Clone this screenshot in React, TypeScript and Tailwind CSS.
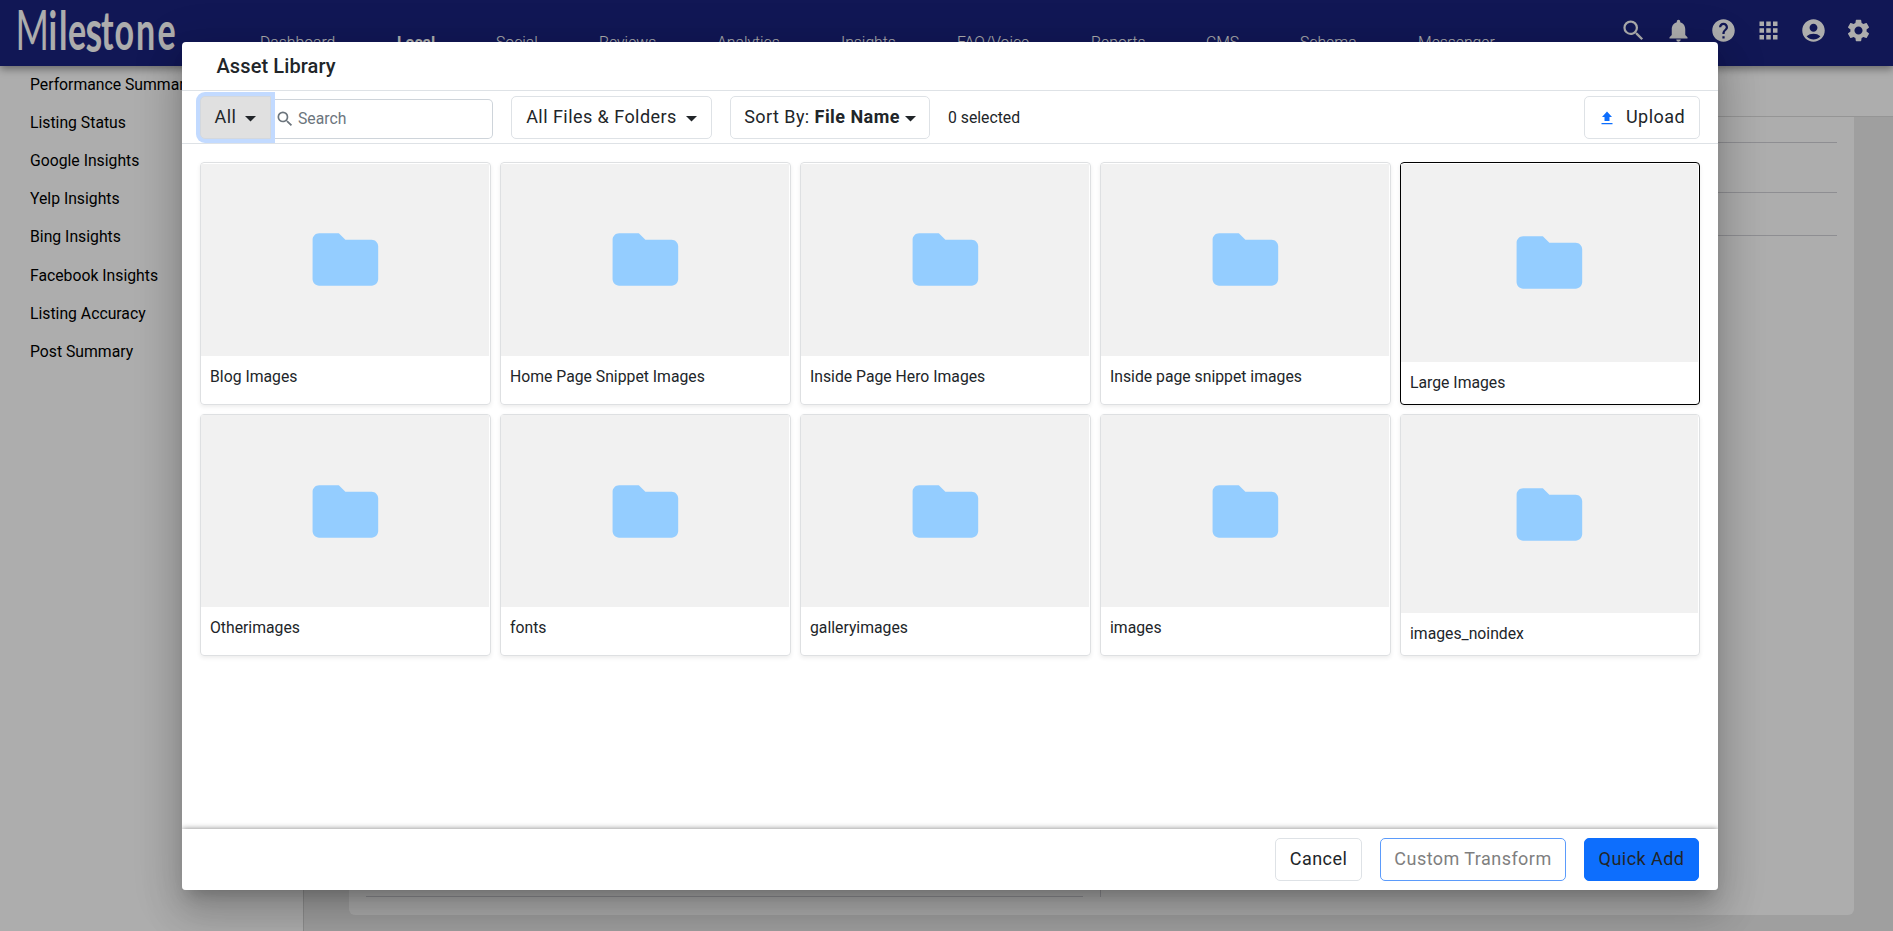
import type { ReactNode } from 'react'
import {
  MdAccountCircle,
  MdApps,
  MdFolder,
  MdHelp,
  MdNotifications,
  MdSearch,
  MdSettings,
} from 'react-icons/md'
import { clsx } from 'clsx'

const navItems = [
  { label: 'Dashboard', offset: 'w-[137px]' },
  { label: 'Local', offset: 'w-[99px]', active: true },
  { label: 'Social', offset: 'w-[103px]' },
  { label: 'Reviews', offset: 'w-[118px]' },
  { label: 'Analytics', offset: 'w-[124px]' },
  { label: 'Insights', offset: 'w-[116px]' },
  { label: 'FAQ/Voice', offset: 'w-[134px]' },
  { label: 'Reports', offset: 'w-[115px]' },
  { label: 'CMS', offset: 'w-[94px]' },
  { label: 'Schema', offset: 'w-[118px]' },
  { label: 'Messenger', offset: 'w-[100px]' },
]

const sideItems = [
  'Performance Summary',
  'Listing Status',
  'Google Insights',
  'Yelp Insights',
  'Bing Insights',
  'Facebook Insights',
  'Listing Accuracy',
  'Post Summary',
]

const folders = [
  'Blog Images',
  'Home Page Snippet Images',
  'Inside Page Hero Images',
  'Inside page snippet images',
  'Large Images',
  'Otherimages',
  'fonts',
  'galleryimages',
  'images',
  'images_noindex',
]

function Logo() {
  return (
    <svg width="190" height="66" viewBox="0 0 190 66" fill="#fff" className="overflow-visible">
      <text
        transform="translate(0 50) scale(1 1.56)"
        x="15.5 48.5 59 68 85.5 101 114.5 136 157.5"
        y="0"
        fontFamily="Lato, sans-serif"
        fontSize="34"
        fontWeight="700"
      >
        <tspan fontSize="36" fontWeight="400">M</tspan>ile<tspan dy="1.5" fontSize="38">s</tspan>
        <tspan dy="-1.5">tone</tspan>
      </text>
    </svg>
  )
}

function TopBar() {
  return (
    <header className="relative z-10 flex h-[66px] shrink-0 bg-[#1a237e] text-white shadow-[0_3px_8px_rgba(0,0,0,0.4)]">
      <div className="w-[260px] shrink-0">
        <Logo />
      </div>
      <nav className="flex pt-[33px] text-[15.75px] leading-5">
        {navItems.map(item => (
          <span key={item.label} className={clsx('shrink-0', item.offset, item.active ? 'font-bold' : 'font-light')}>
            {item.label}
          </span>
        ))}
      </nav>
      <div className="ml-auto flex gap-[18px] pt-[17px] pr-[21px] text-[27px]">
        <MdSearch />
        <MdNotifications />
        <MdHelp />
        <MdApps />
        <MdAccountCircle />
        <MdSettings />
      </div>
    </header>
  )
}

function PageBehind() {
  return (
    <div className="flex h-[931px] flex-col">
      <TopBar />
      <div className="flex min-h-0 flex-1">
        <aside className="w-[304px] shrink-0 border-r border-[#d0d0d0] bg-white pl-[30px] text-[15.75px] leading-6 text-black">
          {sideItems.map(item => (
            <div key={item} className="flex h-[38.1px] items-center whitespace-nowrap">
              {item}
            </div>
          ))}
        </aside>
        <main className="flex flex-1 flex-col bg-[#ebebeb]">
          <div className="h-[51px] shrink-0 border-b border-[#dcdcdc] bg-white" />
          <section className="mr-[39px] ml-[45px] h-[798px] rounded-b-md bg-white px-[17px]">
            <div className="h-[26px] border-b border-[#d2d2d8]" />
            <div className="h-[50px] border-b border-[#d2d2d8]" />
            <div className="h-[43px] border-b border-[#d2d2d8]" />
            <div className="flex h-[661px]">
              <div className="w-[717px] border-b border-[#d2d2d8]" />
              <div className="w-[18px] border-r border-[#d2d2d8]" />
            </div>
          </section>
        </main>
      </div>
    </div>
  )
}

function Button({ className, children }: { className: string; children: ReactNode }) {
  return (
    <button
      className={clsx(
        'flex h-[43px] shrink-0 items-center justify-center rounded-[5px] border pb-0.5 text-lg tracking-[0.45px] whitespace-nowrap',
        className
      )}
    >
      {children}
    </button>
  )
}

function Caret({ className }: { className?: string }) {
  return (
    <svg className={clsx('mt-1 shrink-0', className)} width="11" height="6" viewBox="0 0 11 6" fill="#212529">
      <path d="M0 0h11L5.5 5.5z" />
    </svg>
  )
}

function Toolbar() {
  return (
    <div className="flex h-[53px] shrink-0 items-start border-b border-[#dee2e6] px-[18px] pt-[5px]">
      <button className="relative flex h-[43px] w-[71px] shrink-0 items-center rounded-l-[5px] border border-[#d3d8de] bg-[#e0e0e0] pb-0.5 pl-[13.5px] text-lg tracking-[0.45px] shadow-[0_0_0_4px_#c2daff]">
        All
        <Caret className="ml-[9px]" />
      </button>
      <div className="mt-[3px] flex h-10 w-[222px] items-center rounded-r-[5px] border border-l-0 border-[#ced4da] pl-1 text-[15.75px] text-[#6c757d]">
        <MdSearch className="mr-[3px] text-[20px]" />
        Search
      </div>
      <div className="ml-[18px] flex items-center gap-[18px]">
        <Button className="w-[201px] border-[#dee2e6]">
          All Files &amp; Folders
          <Caret className="ml-[9px]" />
        </Button>
        <Button className="w-[200px] border-[#dee2e6]">
          Sort By:&nbsp;<b>File Name</b>
          <Caret className="ml-[5px]" />
        </Button>
        <span className="text-[15.75px]">0 selected</span>
      </div>
      <Button className="ml-auto w-[116px] border-[#dee2e6] pl-0.5">
        <svg className="mt-0.5 mr-[13px]" width="12" height="14" viewBox="0 0 12 14" fill="#0d6efd">
          <path d="M6 0.5 11 6H8.5v4h-5V6H1zM0.5 12h11v1.3H.5z" />
        </svg>
        Upload
      </Button>
    </div>
  )
}

function FolderCard({ name, last, selected }: { name: string; last: boolean; selected: boolean }) {
  return (
    <div
      className={clsx(
        'mb-[9px] rounded-[4px] border pt-[0.8px] pr-px shadow-[0_2px_4px_rgba(0,0,0,0.075)]',
        !last && 'mr-[9px]',
        selected ? 'border-black' : 'border-[#dee0e2]'
      )}
    >
      <div className="flex aspect-[3/2] items-center justify-center bg-[#f1f1f1]">
        <MdFolder className="mb-px text-[78.75px] text-[#94cdff]" />
      </div>
      <div className="px-[9px] pt-[9px] text-[15.75px] leading-6">{name}</div>
    </div>
  )
}

function AssetLibraryDialog() {
  return (
    <div className="flex h-[848px] w-[1536px] flex-col overflow-hidden rounded bg-white">
      <div className="flex h-[49px] shrink-0 items-center border-b border-[#dee2e6] pl-[34.5px] text-xl font-medium tracking-[0.1px]">
        Asset Library
      </div>
      <Toolbar />
      <div className="min-h-0 flex-1 px-[18px] pt-[18px]">
        <div className="grid auto-rows-[251.6px] grid-cols-5">
          {folders.map((name, i) => (
            <FolderCard key={name} name={name} last={i % 5 === 4} selected={name === 'Large Images'} />
          ))}
        </div>
      </div>
      <div className="flex h-[61px] shrink-0 justify-end gap-[18px] bg-white pt-[9px] pr-[19px] shadow-[0_0_6px_rgba(0,0,0,0.5)]">
        <Button className="w-[87px] border-[#dee2e6]">Cancel</Button>
        <Button className="w-[186px] border-[#5b9bfb] text-[#7f7f7f]">Custom Transform</Button>
        <Button className="w-[115px] border-[#0d6efd] bg-[#0d6efd]">Quick Add</Button>
      </div>
    </div>
  )
}

export default function App() {
  return (
    <div className="relative h-[931px] w-[1893px] overflow-hidden font-[Roboto,sans-serif] text-[#212529]">
      <PageBehind />
      <div className="absolute inset-0 z-20 flex items-start bg-black/32 pt-[42px] pl-[182px]">
        <div className="rounded shadow-[0_11px_15px_-7px_rgba(0,0,0,0.2),0_24px_38px_3px_rgba(0,0,0,0.14),0_9px_46px_8px_rgba(0,0,0,0.12)]">
          <AssetLibraryDialog />
        </div>
      </div>
    </div>
  )
}
